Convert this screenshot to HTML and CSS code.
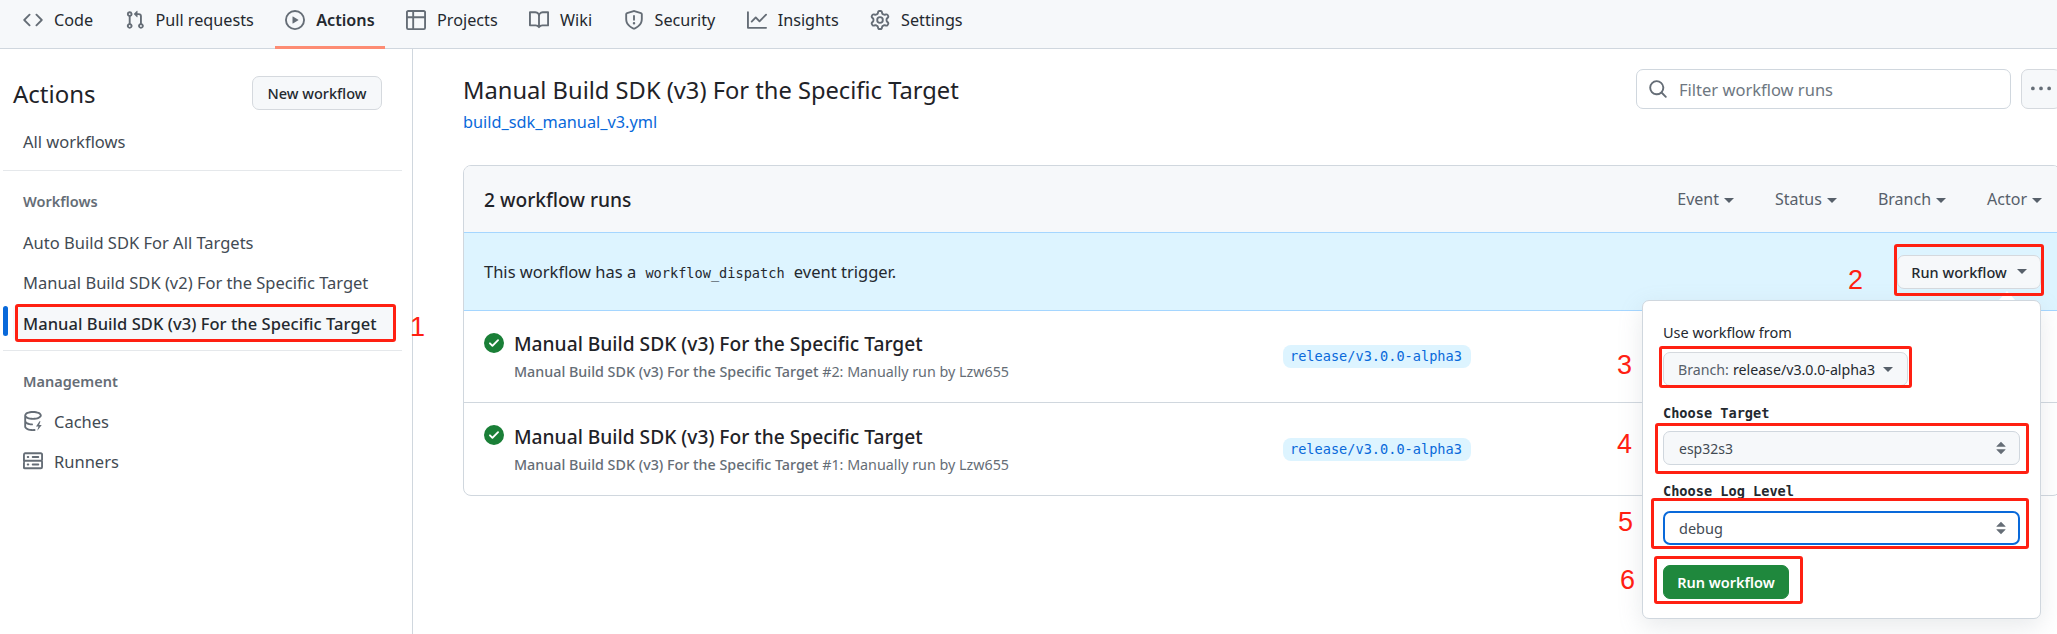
FILE: index.html
```html
<!DOCTYPE html>
<html lang="en">
<head>
    <meta charset="UTF-8">
    <meta name="viewport" content="width=device-width, initial-scale=1.0">
    <title>Actions - Manual Build SDK (v3) For the Specific Target</title>
    <link rel="stylesheet" href="styles.css">
</head>
<body>
    <!-- Octicon sprite -->
    <svg class="sprite" xmlns="http://www.w3.org/2000/svg">
        <symbol id="i-code" viewBox="0 0 16 16"><path d="M11.28 3.22l4.25 4.25a.75.75 0 0 1 0 1.06l-4.25 4.25a.749.749 0 0 1-1.275-.326.749.749 0 0 1 .215-.734L13.94 8l-3.72-3.72a.749.749 0 0 1 .326-1.275.749.749 0 0 1 .734.215Zm-6.56 0a.751.751 0 0 1 1.042.018.751.751 0 0 1 .018 1.042L2.06 8l3.72 3.72a.749.749 0 0 1-.326 1.275.749.749 0 0 1-.734-.215L.47 8.53a.75.75 0 0 1 0-1.06Z"/></symbol>
        <symbol id="i-pr" viewBox="0 0 16 16"><path d="M1.5 3.25a2.25 2.25 0 1 1 3 2.122v5.256a2.251 2.251 0 1 1-1.5 0V5.372A2.25 2.25 0 0 1 1.5 3.25Zm5.677-.177L9.573.677A.25.25 0 0 1 10 .854V2.5h1A2.5 2.5 0 0 1 13.5 5v5.628a2.251 2.251 0 1 1-1.5 0V5a1 1 0 0 0-1-1h-1v1.646a.25.25 0 0 1-.427.177L7.177 3.427a.25.25 0 0 1 0-.354ZM3.75 2.5a.75.75 0 1 0 0 1.5.75.75 0 0 0 0-1.5Zm0 9.5a.75.75 0 1 0 0 1.5.75.75 0 0 0 0-1.5Zm8.25.75a.75.75 0 1 0 1.5 0 .75.75 0 0 0-1.5 0Z"/></symbol>
        <symbol id="i-play" viewBox="0 0 16 16"><path d="M8 0a8 8 0 1 1 0 16A8 8 0 0 1 8 0ZM1.5 8a6.5 6.5 0 1 0 13 0 6.5 6.5 0 0 0-13 0Zm4.879-2.773 4.264 2.559a.25.25 0 0 1 0 .428l-4.264 2.559A.25.25 0 0 1 6 10.559V5.442a.25.25 0 0 1 .379-.215Z"/></symbol>
        <symbol id="i-table" viewBox="0 0 16 16"><path d="M0 1.75C0 .784.784 0 1.75 0h12.5C15.216 0 16 .784 16 1.75v12.5A1.75 1.75 0 0 1 14.25 16H1.75A1.75 1.75 0 0 1 0 14.25ZM6.5 6.5v8h7.75a.25.25 0 0 0 .25-.25V6.5Zm8-1.5V1.75a.25.25 0 0 0-.25-.25H6.5V5Zm-13 1.5v7.75c0 .138.112.25.25.25H5v-8ZM5 5V1.5H1.75a.25.25 0 0 0-.25.25V5Z"/></symbol>
        <symbol id="i-book" viewBox="0 0 16 16"><path d="M0 1.75A.75.75 0 0 1 .75 1h4.253c1.227 0 2.317.59 3 1.501A3.743 3.743 0 0 1 11.006 1h4.245a.75.75 0 0 1 .75.75v10.5a.75.75 0 0 1-.75.75h-4.507a2.25 2.25 0 0 0-1.591.659l-.622.621a.75.75 0 0 1-1.06 0l-.622-.621A2.25 2.25 0 0 0 5.258 13H.75a.75.75 0 0 1-.75-.75Zm7.251 10.324.004-5.073-.002-2.253A2.25 2.25 0 0 0 5.003 2.5H1.5v9h3.757a3.75 3.75 0 0 1 1.994.574ZM8.755 4.75l-.004 7.322a3.752 3.752 0 0 1 1.992-.572H14.5v-9h-3.495a2.25 2.25 0 0 0-2.25 2.25Z"/></symbol>
        <symbol id="i-shield" viewBox="0 0 16 16"><path d="M7.467.133a1.748 1.748 0 0 1 1.066 0l5.25 1.68A1.75 1.75 0 0 1 15 3.48V7c0 1.566-.32 3.182-1.303 4.682-.983 1.498-2.585 2.813-5.032 3.855a1.697 1.697 0 0 1-1.33 0c-2.447-1.042-4.049-2.357-5.032-3.855C1.32 10.182 1 8.566 1 7V3.48a1.75 1.75 0 0 1 1.217-1.667Zm.61 1.429a.25.25 0 0 0-.153 0l-5.25 1.68a.25.25 0 0 0-.174.238V7c0 1.358.275 2.666 1.057 3.86.784 1.194 2.121 2.34 4.366 3.297a.196.196 0 0 0 .154 0c2.245-.956 3.582-2.104 4.366-3.298C13.225 9.666 13.5 8.36 13.5 7V3.48a.251.251 0 0 0-.174-.237l-5.25-1.68ZM8.75 4.75v3a.75.75 0 0 1-1.5 0v-3a.75.75 0 0 1 1.5 0ZM9 10.5a1 1 0 1 1-2 0 1 1 0 0 1 2 0Z"/></symbol>
        <symbol id="i-graph" viewBox="0 0 16 16"><path d="M1.5 1.75V13.5h13.75a.75.75 0 0 1 0 1.5H.75a.75.75 0 0 1-.75-.75V1.75a.75.75 0 0 1 1.5 0Zm14.28 2.53-5.25 5.25a.75.75 0 0 1-1.06 0L7 7.06 4.28 9.78a.751.751 0 0 1-1.042-.018.751.751 0 0 1-.018-1.042l3.25-3.25a.75.75 0 0 1 1.06 0L10 7.94l4.72-4.72a.751.751 0 0 1 1.042.018.751.751 0 0 1 .018 1.042Z"/></symbol>
        <symbol id="i-gear" viewBox="0 0 16 16"><path d="M8 0a8.2 8.2 0 0 1 .701.031C9.444.095 9.99.645 10.16 1.29l.288 1.107c.018.066.079.158.212.224.231.114.454.243.668.386.123.082.233.09.299.071l1.103-.303c.644-.176 1.392.021 1.82.63.27.385.506.792.704 1.218.315.675.111 1.422-.364 1.891l-.814.806c-.049.048-.098.147-.088.294.016.257.016.515 0 .772-.01.147.038.246.088.294l.814.806c.475.469.679 1.216.364 1.891a7.977 7.977 0 0 1-.704 1.217c-.428.61-1.176.807-1.82.63l-1.102-.302c-.067-.019-.177-.011-.3.071a5.909 5.909 0 0 1-.668.386c-.133.066-.194.158-.211.224l-.29 1.106c-.168.646-.715 1.196-1.458 1.26a8.006 8.006 0 0 1-1.402 0c-.743-.064-1.289-.614-1.458-1.26l-.289-1.106c-.018-.066-.079-.158-.212-.224a5.738 5.738 0 0 1-.668-.386c-.123-.082-.233-.09-.299-.071l-1.103.303c-.644.176-1.392-.021-1.82-.63a8.12 8.12 0 0 1-.704-1.218c-.315-.675-.111-1.422.363-1.891l.815-.806c.05-.048.098-.147.088-.294a6.214 6.214 0 0 1 0-.772c.01-.147-.038-.246-.088-.294l-.815-.806C.635 6.045.431 5.298.746 4.623a7.92 7.92 0 0 1 .704-1.217c.428-.61 1.176-.807 1.82-.63l1.102.302c.067.019.177.011.3-.071.214-.143.437-.272.668-.386.133-.066.194-.158.211-.224l.29-1.106C6.009.645 6.556.095 7.299.03 7.53.01 7.764 0 8 0Zm-.571 1.525c-.036.003-.108.036-.137.146l-.289 1.105c-.147.561-.549.967-.998 1.189-.173.086-.34.183-.5.29-.417.278-.97.423-1.529.27l-1.103-.303c-.109-.03-.175.016-.195.045-.22.312-.412.644-.573.99-.014.031-.021.11.059.19l.815.806c.411.406.562.957.53 1.456a4.709 4.709 0 0 0 0 .582c.032.499-.119 1.05-.53 1.456l-.815.806c-.081.08-.073.159-.059.19.162.346.353.677.573.989.02.03.085.076.195.046l1.102-.303c.56-.153 1.113-.008 1.53.27.161.107.328.204.501.29.447.222.85.629.997 1.189l.289 1.105c.029.109.101.143.137.146a6.6 6.6 0 0 0 1.142 0c.036-.003.108-.036.137-.146l.289-1.105c.147-.561.549-.967.998-1.189.173-.086.34-.183.5-.29.417-.278.97-.423 1.529-.27l1.103.303c.109.029.175-.016.195-.045.22-.313.411-.644.573-.99.014-.031.021-.11-.059-.19l-.815-.806c-.411-.406-.562-.957-.53-1.456a4.709 4.709 0 0 0 0-.582c-.032-.499.119-1.05.53-1.456l.815-.806c.081-.08.073-.159.059-.19a6.464 6.464 0 0 0-.573-.989c-.02-.03-.085-.076-.195-.046l-1.102.303c-.56.153-1.113.008-1.53-.27a4.44 4.44 0 0 0-.501-.29c-.447-.222-.85-.629-.997-1.189l-.289-1.105c-.029-.11-.101-.143-.137-.146a6.6 6.6 0 0 0-1.142 0ZM11 8a3 3 0 1 1-6 0 3 3 0 0 1 6 0ZM9.5 8a1.5 1.5 0 1 0-3.001.001A1.5 1.5 0 0 0 9.5 8Z"/></symbol>
        <symbol id="i-search" viewBox="0 0 16 16"><path d="M10.68 11.74a6 6 0 0 1-7.922-8.982 6 6 0 0 1 8.982 7.922l3.04 3.04a.749.749 0 0 1-.326 1.275.749.749 0 0 1-.734-.215ZM11.5 7a4.499 4.499 0 1 0-8.997 0A4.499 4.499 0 0 0 11.5 7Z"/></symbol>
        <symbol id="i-kebab" viewBox="0 0 16 16"><path d="M8 9a1.5 1.5 0 1 0 0-3 1.5 1.5 0 0 0 0 3ZM1.5 9a1.5 1.5 0 1 0 0-3 1.5 1.5 0 0 0 0 3Zm13 0a1.5 1.5 0 1 0 0-3 1.5 1.5 0 0 0 0 3Z"/></symbol>
        <symbol id="i-check" viewBox="0 0 16 16"><path d="M8 16A8 8 0 1 1 8 0a8 8 0 0 1 0 16Zm3.78-9.72a.751.751 0 0 0-.018-1.042.751.751 0 0 0-1.042-.018L6.75 9.19 5.28 7.72a.751.751 0 0 0-1.042.018.751.751 0 0 0-.018 1.042l2 2a.75.75 0 0 0 1.06 0Z"/></symbol>
        <symbol id="i-cache" viewBox="0 0 16 16"><path d="M2.5 5.724V8c0 .248.238.7 1.169 1.159.874.43 2.144.745 3.62.822a.75.75 0 1 1-.078 1.498c-1.622-.085-3.102-.432-4.204-.975a5.565 5.565 0 0 1-.507-.28V12.5c0 .133.058.318.282.551.227.237.591.483 1.101.707 1.015.447 2.47.742 4.117.742.406 0 .802-.018 1.183-.052a.75.75 0 1 1 .134 1.494C8.89 15.98 8.45 16 8 16c-1.805 0-3.475-.32-4.721-.869-.623-.274-1.173-.619-1.579-1.041-.408-.425-.7-.964-.7-1.59v-9c0-.626.292-1.165.7-1.591.406-.42.956-.766 1.579-1.04C4.525.32 6.195 0 8 0c1.806 0 3.476.32 4.721.869.623.274 1.173.619 1.579 1.041.408.425.7.964.7 1.59 0 .626-.292 1.165-.7 1.591-.406.42-.956.766-1.578 1.04C11.475 6.68 9.805 7 8 7c-1.805 0-3.475-.32-4.721-.869a6.15 6.15 0 0 1-.779-.407Zm0-2.224c0 .133.058.318.282.551.227.237.591.483 1.101.707C4.898 5.205 6.353 5.5 8 5.5c1.646 0 3.101-.295 4.118-.742.508-.224.873-.471 1.1-.708.224-.232.282-.417.282-.55 0-.133-.058-.318-.282-.551-.227-.237-.591-.483-1.101-.707C11.102 1.795 9.647 1.5 8 1.5c-1.646 0-3.101.295-4.118.742-.508.224-.873.471-1.1.708-.224.232-.282.417-.282.55ZM13.2 8.2 10.4 12.3h2l-1 3.5 3.6-4.7h-2.1l1.1-2.9Z"/></symbol>
        <symbol id="i-server" viewBox="0 0 16 16"><path d="M1.75 1h12.5c.966 0 1.75.784 1.75 1.75v4c0 .372-.116.717-.314 1 .198.283.314.628.314 1v4a1.75 1.75 0 0 1-1.75 1.75H1.75A1.75 1.75 0 0 1 0 13.75v-4c0-.372.116-.717.314-1a1.739 1.739 0 0 1-.314-1v-4C0 1.784.784 1 1.75 1ZM1.5 2.75v4c0 .138.112.25.25.25h12.5a.25.25 0 0 0 .25-.25v-4a.25.25 0 0 0-.25-.25H1.75a.25.25 0 0 0-.25.25Zm.25 5.75a.25.25 0 0 0-.25.25v4c0 .138.112.25.25.25h12.5a.25.25 0 0 0 .25-.25v-4a.25.25 0 0 0-.25-.25ZM7 4.75A.75.75 0 0 1 7.75 4h4.5a.75.75 0 0 1 0 1.5h-4.5A.75.75 0 0 1 7 4.75ZM7.75 10h4.5a.75.75 0 0 1 0 1.5h-4.5a.75.75 0 0 1 0-1.5ZM3 4.75A.75.75 0 0 1 3.75 4h.5a.75.75 0 0 1 0 1.5h-.5A.75.75 0 0 1 3 4.75ZM3.75 10h.5a.75.75 0 0 1 0 1.5h-.5a.75.75 0 0 1 0-1.5Z"/></symbol>
        <symbol id="i-unfold" viewBox="0 0 16 16"><path d="M4.427 9.427l3.396 3.396a.25.25 0 0 0 .354 0l3.396-3.396A.25.25 0 0 0 11.396 9H4.604a.25.25 0 0 0-.177.427ZM4.427 6.573l3.396-3.396a.25.25 0 0 1 .354 0l3.396 3.396A.25.25 0 0 1 11.396 7H4.604a.25.25 0 0 1-.177-.427Z"/></symbol>
    </svg>

    <div class="page">
        <!-- Repository tabs -->
        <nav class="tabs">
            <a class="tab"><svg class="icon"><use href="#i-code"/></svg>Code</a>
            <a class="tab"><svg class="icon"><use href="#i-pr"/></svg>Pull requests</a>
            <a class="tab tab-active"><svg class="icon"><use href="#i-play"/></svg>Actions</a>
            <a class="tab"><svg class="icon"><use href="#i-table"/></svg>Projects</a>
            <a class="tab"><svg class="icon"><use href="#i-book"/></svg>Wiki</a>
            <a class="tab"><svg class="icon"><use href="#i-shield"/></svg>Security</a>
            <a class="tab"><svg class="icon"><use href="#i-graph"/></svg>Insights</a>
            <a class="tab"><svg class="icon"><use href="#i-gear"/></svg>Settings</a>
        </nav>

        <div class="layout">
            <!-- Left sidebar -->
            <aside class="sidebar">
                <div class="side-head">
                    <h2>Actions</h2>
                    <button class="btn btn-new">New workflow</button>
                </div>
                <a class="side-item">All workflows</a>
                <hr class="side-rule rule-first">
                <div class="side-label">Workflows</div>
                <a class="side-item">Auto Build SDK For All Targets</a>
                <a class="side-item">Manual Build SDK (v2) For the Specific Target</a>
                <a class="side-item side-current">Manual Build SDK (v3) For the Specific Target</a>
                <hr class="side-rule rule-second">
                <div class="side-label">Management</div>
                <a class="side-item"><svg class="icon"><use href="#i-cache"/></svg>Caches</a>
                <a class="side-item"><svg class="icon"><use href="#i-server"/></svg>Runners</a>
            </aside>

            <!-- Workflow runs -->
            <main class="content">
                <div class="content-head">
                    <div>
                        <h1>Manual Build SDK (v3) For the Specific Target</h1>
                        <a class="file-link">build_sdk_manual_v3.yml</a>
                    </div>
                    <div class="head-tools">
                        <div class="search"><svg class="icon"><use href="#i-search"/></svg>Filter workflow runs</div>
                        <button class="btn btn-kebab"><svg class="icon"><use href="#i-kebab"/></svg></button>
                    </div>
                </div>

                <section class="card">
                    <div class="card-head">
                        <strong>2 workflow runs</strong>
                        <div class="filters">
                            <span class="filter">Event<i class="caret"></i></span>
                            <span class="filter">Status<i class="caret"></i></span>
                            <span class="filter">Branch<i class="caret"></i></span>
                            <span class="filter">Actor<i class="caret"></i></span>
                        </div>
                    </div>
                    <div class="banner">
                        <span>This workflow has a <code>workflow_dispatch</code> event trigger.</span>
                        <button class="btn btn-run">Run workflow<i class="caret"></i></button>
                    </div>
                    <div class="run">
                        <svg class="icon icon-ok"><use href="#i-check"/></svg>
                        <div class="run-text">
                            <div class="run-title">Manual Build SDK (v3) For the Specific Target</div>
                            <div class="run-sub"><b>Manual Build SDK (v3) For the Specific Target</b> #2: Manually run by Lzw655</div>
                        </div>
                        <span class="branch-tag">release/v3.0.0-alpha3</span>
                    </div>
                    <div class="run">
                        <svg class="icon icon-ok"><use href="#i-check"/></svg>
                        <div class="run-text">
                            <div class="run-title">Manual Build SDK (v3) For the Specific Target</div>
                            <div class="run-sub"><b>Manual Build SDK (v3) For the Specific Target</b> #1: Manually run by Lzw655</div>
                        </div>
                        <span class="branch-tag">release/v3.0.0-alpha3</span>
                    </div>
                </section>
            </main>
        </div>

        <!-- Run workflow popup -->
        <div class="popup">
            <div class="popup-title">Use workflow from</div>
            <button class="btn btn-branch">Branch: <span>release/v3.0.0-alpha3</span><i class="caret"></i></button>
            <label class="popup-label">Choose Target</label>
            <div class="picker">esp32s3<svg class="icon"><use href="#i-unfold"/></svg></div>
            <label class="popup-label label-log">Choose Log Level</label>
            <div class="picker picker-focus">debug<svg class="icon"><use href="#i-unfold"/></svg></div>
            <button class="btn btn-green">Run workflow</button>
        </div>

        <!-- Red annotations drawn over the screenshot -->
        <div class="mark mark-1"></div>
        <div class="mark mark-2"></div>
        <div class="mark mark-3"></div>
        <div class="mark mark-4"></div>
        <div class="mark mark-5"></div>
        <div class="mark mark-6"></div>
        <span class="num num-1">1</span>
        <span class="num num-2">2</span>
        <span class="num num-3">3</span>
        <span class="num num-4">4</span>
        <span class="num num-5">5</span>
        <span class="num num-6">6</span>
    </div>
</body>
</html>
```

FILE: styles.css
```css
* {
    box-sizing: border-box;
}
body {
    font-family: "Noto Sans", sans-serif;
    font-size: 16.5px;
    margin: 0;
    padding: 0;
    background-color: #fff;
    color: #1f2328;
}
.sprite {
    display: none;
}
.icon {
    width: 20px;
    height: 20px;
    fill: #656d76;
    flex: none;
}
.page {
    position: relative;
    width: 2057px;
    height: 634px;
    overflow: hidden;
}

/* tabs */
.tabs {
    display: flex;
    gap: 11.4px;
    height: 49px;
    padding-left: 13px;
    background-color: #f6f8fa;
    border-bottom: 1px solid #d0d7de;
    font-size: 16.2px;
}
.tab {
    display: flex;
    align-items: center;
    gap: 11px;
    height: 49px;
    padding: 0 10px 9px;
    color: #24292f;
}
.tab-active {
    font-weight: 600;
    border-bottom: 3px solid #fd8c73;
    padding-bottom: 6px;
}

/* page columns */
.layout {
    display: flex;
    height: 585px;
}
.sidebar {
    width: 413px;
    flex: none;
    padding: 27px 10px 0 3px;
    border-right: 1px solid #d0d7de;
}
.side-head {
    display: flex;
    justify-content: space-between;
    align-items: center;
    height: 34px;
    padding: 0 20px 0 10px;
    margin-bottom: 11px;
}
.side-head h2 {
    font-size: 24px;
    font-weight: 400;
    margin: 0;
}
.side-item {
    display: flex;
    align-items: center;
    gap: 11px;
    height: 40px;
    padding-left: 20px;
    color: #424a53;
}
.side-current {
    position: relative;
    height: 38px;
    margin: 2px 7px 0 10px;
    padding-left: 10px;
    background-color: #f6f8fa;
    border-radius: 6px;
    color: #24292f;
    font-weight: 500;
    letter-spacing: 0.05px;
}
.side-current::before {
    content: "";
    position: absolute;
    left: -10px;
    top: 2px;
    width: 5px;
    height: 30px;
    background-color: #0969da;
    border-radius: 3px;
}
.side-label {
    height: 20px;
    line-height: 20px;
    padding-left: 20px;
    font-size: 14.5px;
    font-weight: 600;
    color: #656d76;
    margin: 20px 0 11px;
}
.side-rule {
    border: 0;
    border-top: 1px solid #e5e8eb;
    margin: 0;
}
.rule-first {
    margin-top: 9px;
}
.rule-second {
    margin-top: 8px;
}
.rule-second + .side-label {
    margin-bottom: 10px;
}

/* main area */
.content {
    flex: 1;
    margin-right: -4px;
    padding: 20px 0 0 50px;
    min-width: 0;
}
.content-head {
    display: flex;
    justify-content: space-between;
    height: 96px;
}
.content-head h1 {
    font-size: 23.7px;
    font-weight: 400;
    line-height: 42px;
    margin: 0;
}
.file-link {
    display: block;
    line-height: 22px;
    color: #0969da;
    font-size: 16.3px;
}
.head-tools {
    display: flex;
    gap: 10px;
}
.search {
    display: flex;
    align-items: center;
    gap: 11px;
    width: 375px;
    height: 40px;
    padding-left: 11px;
    border: 1px solid #d0d7de;
    border-radius: 7px;
    color: #6e7781;
}
.btn {
    font-family: inherit;
    font-size: 14.5px;
    font-weight: 500;
    color: #24292f;
    background-color: #f6f8fa;
    border: 1px solid #d5d9de;
    border-radius: 7px;
    padding: 0;
}
.btn-new {
    width: 130px;
    height: 34px;
}
.btn-kebab {
    display: flex;
    align-items: center;
    justify-content: center;
    width: 40px;
    height: 40px;
}
.caret {
    display: inline-block;
    border-top: 5px solid #57606a;
    border-left: 5px solid transparent;
    border-right: 5px solid transparent;
}

/* runs card */
.card {
    border: 1px solid #d0d7de;
    border-radius: 8px;
    overflow: hidden;
}
.card-head {
    display: flex;
    justify-content: space-between;
    align-items: center;
    height: 67px;
    padding: 0 18px 0 20px;
    background-color: #f6f8fa;
    border-bottom: 1px solid #a5d6ff;
}
.card-head strong {
    font-size: 19.2px;
    font-weight: 500;
}
.filters {
    display: flex;
    gap: 41px;
    color: #57606a;
    font-size: 16px;
}
.filter .caret {
    margin-left: 5px;
    vertical-align: 2px;
}
.banner {
    display: flex;
    justify-content: space-between;
    align-items: center;
    height: 78px;
    padding: 0 19px 0 20px;
    background-color: #ddf4ff;
    border-bottom: 1px solid #a5d6ff;
    color: #24292f;
    font-size: 16.5px;
}
.banner code {
    font-family: "DejaVu Sans Mono", monospace;
    font-size: 13.6px;
    margin: 0 5px;
}
.btn-run {
    display: flex;
    align-items: center;
    justify-content: center;
    gap: 10px;
    width: 144px;
    height: 34px;
}
.run {
    display: grid;
    grid-template-columns: 30px 769px auto;
    align-items: center;
    height: 92px;
    padding: 0 0 0 20px;
    border-bottom: 1px solid #d0d7de;
}
.run:last-child {
    border-bottom: 0;
}
.icon-ok {
    fill: #1a7f37;
    align-self: start;
    margin-top: 22px;
}
.run-title {
    font-size: 19.2px;
    font-weight: 500;
    line-height: 26px;
}
.run-sub {
    font-size: 14.3px;
    line-height: 20px;
    margin-top: 5px;
    color: #656d76;
}
.run-sub b {
    font-weight: 500;
}
.run-text {
    align-self: start;
    padding-top: 20px;
}
.run + .run .run-text {
    padding-top: 21px;
}
.branch-tag {
    justify-self: start;
    height: 23px;
    line-height: 23px;
    padding: 0 9px 0 7px;
    background-color: #ddf4ff;
    border-radius: 8px;
    color: #0969da;
    font-family: "DejaVu Sans Mono", monospace;
    font-size: 13.6px;
}

/* popup */
.popup {
    position: absolute;
    left: 1642px;
    top: 300px;
    width: 399px;
    height: 319px;
    padding: 20px;
    background-color: #fff;
    border: 1px solid #d0d7de;
    border-radius: 7px;
    box-shadow: 0 8px 24px rgba(140, 149, 159, 0.2);
}
.popup::before {
    content: "";
    position: absolute;
    left: 356px;
    top: -10px;
    border-bottom: 9px solid #fff;
    border-left: 8px solid transparent;
    border-right: 8px solid transparent;
}
.popup-title {
    font-size: 14.5px;
    line-height: 22px;
    color: #24292f;
}
.btn-branch {
    display: flex;
    align-items: center;
    gap: 4px;
    width: 245px;
    height: 34px;
    margin-top: 9px;
    padding-left: 14px;
    font-size: 14.2px;
    font-weight: 400;
    color: #57606a;
    white-space: nowrap;
}
.btn-branch span {
    color: #24292f;
}
.btn-branch .caret {
    margin-left: 4px;
}
.popup-label {
    display: block;
    height: 18px;
    line-height: 18px;
    margin-top: 18px;
    font-family: "DejaVu Sans Mono", monospace;
    font-size: 13.6px;
    font-weight: 700;
    color: #24292f;
}
.label-log {
    margin-top: 17px;
}
.picker {
    display: flex;
    justify-content: space-between;
    align-items: center;
    height: 34px;
    margin-top: 9px;
    padding: 0 8px 0 15px;
    background-color: #f6f8fa;
    border: 1px solid #d0d7de;
    border-radius: 7px;
    color: #424a53;
    font-size: 14px;
}
.picker-focus {
    margin-top: 11px;
    padding-left: 14px;
    padding-right: 7px;
    background-color: #fff;
    border: 2px solid #0969da;
    font-size: 14.5px;
}
.btn-green {
    display: block;
    width: 126px;
    height: 34px;
    margin-top: 20px;
    background-color: #1f883d;
    border-color: #1f883d;
    color: #fff;
    font-size: 14.5px;
    font-weight: 600;
}

/* red annotations */
.mark {
    position: absolute;
    border: 3px solid #ff2012;
    border-radius: 3px;
}
.mark-1 { left: 15px; top: 304px; width: 381px; height: 38px; }
.mark-2 { left: 1894px; top: 244px; width: 150px; height: 52px; }
.mark-3 { left: 1659px; top: 346px; width: 253px; height: 42px; }
.mark-4 { left: 1655px; top: 423px; width: 374px; height: 51px; }
.mark-5 { left: 1651px; top: 498px; width: 378px; height: 51px; }
.mark-6 { left: 1654px; top: 556px; width: 149px; height: 48px; }
.num {
    position: absolute;
    color: #ff2012;
    font-family: "Liberation Sans", sans-serif;
    font-size: 27px;
    line-height: 28px;
}
.num-1 { left: 410px; top: 313px; }
.num-2 { left: 1848px; top: 266px; }
.num-3 { left: 1617px; top: 351px; }
.num-4 { left: 1617px; top: 430px; }
.num-5 { left: 1618px; top: 508px; }
.num-6 { left: 1620px; top: 566px; }
```
